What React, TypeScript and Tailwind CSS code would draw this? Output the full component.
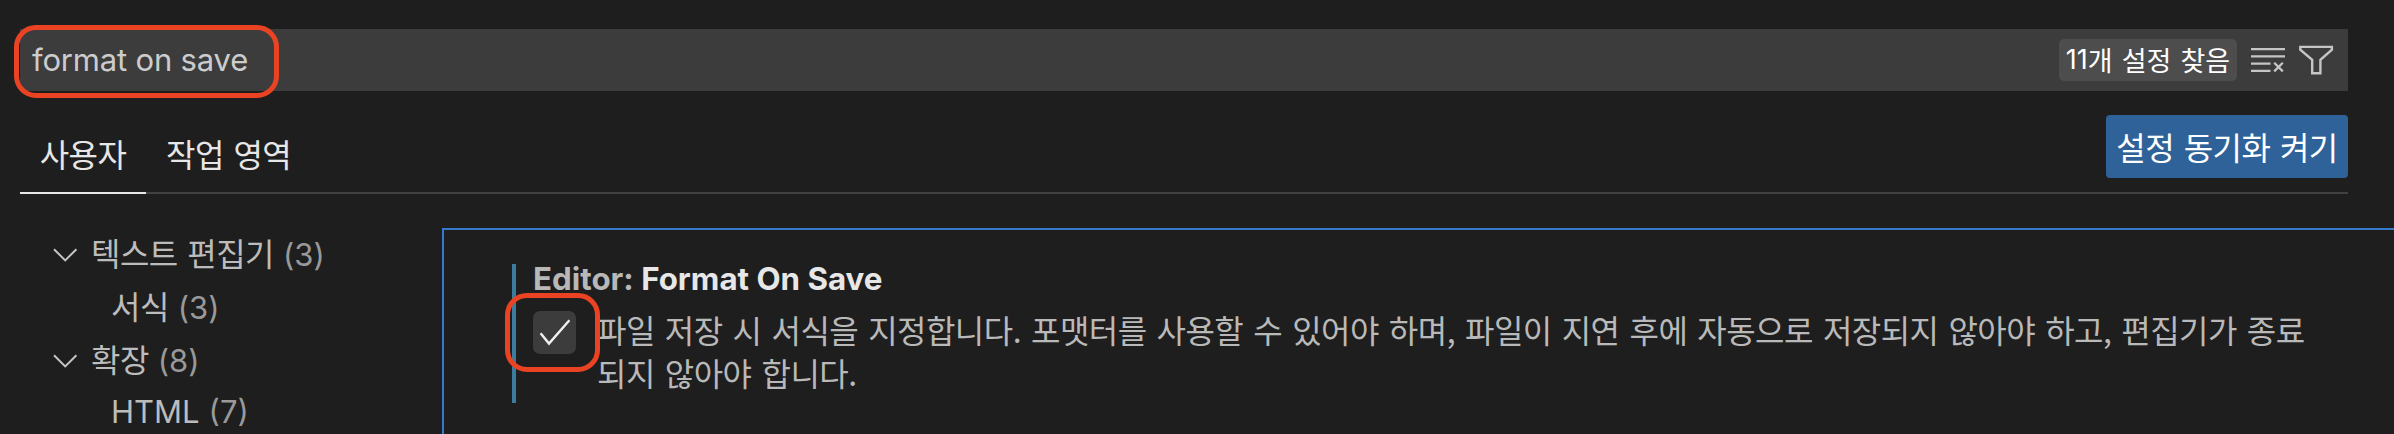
const kr = "font-['Noto_Sans_CJK_KR',sans-serif] tracking-[-0.55px] [word-spacing:3px]";
const latin = "font-['Inter','Noto_Sans_CJK_KR',sans-serif] [word-spacing:0px]";

function SearchBar() {
  return (
    <div className="relative flex h-[62px] items-center justify-between bg-[#3c3c3c] pr-[14px] pl-3">
      <span className={`${latin} pb-px text-[31px] leading-[42px] tracking-[-0.18px] text-[#cccccc]`}>format on save</span>
      <div className="flex items-center">
        <div className="mr-[14px] flex h-[42px] w-[178px] items-center justify-center rounded-[5px] bg-[#4d4d4d] text-[27px] leading-[42px] whitespace-nowrap text-white">
          <span className={latin}>11</span>
          <span className="font-['Noto_Sans_CJK_KR',sans-serif] [word-spacing:3px]">개 설정 찾음</span>
        </div>
        <svg width="34" height="26" viewBox="0 0 34 26" fill="none" stroke="#c5c5c5" strokeWidth="2.3">
          <path d="M0 2.1h34M0 9.3h34M0 16.6h19.5M0 23.8h19.5M23.2 15.8l8.6 8.6M31.8 15.8l-8.6 8.6" />
        </svg>
        <svg className="ml-[14px]" width="35" height="30" viewBox="0 0 35 30" fill="none" stroke="#c5c5c5" strokeWidth="2.4">
          <path d="M1.3 1.9h31.6v2.7L21.4 14.8v13.4h-8.2V14.8L1.3 4.6z" />
        </svg>
      </div>
      <div className="absolute -top-1 -left-[6px] h-[73px] w-[265px] rounded-[22px] border-[5px] border-[#ea4323]" />
    </div>
  );
}

function Tabs() {
  return (
    <div className="flex h-[103px] justify-between border-b-2 border-[#414141]">
      <div className={`${kr} flex text-[32px] leading-[42px] text-[#e7e7e7]`}>
        <div className="-mb-[2px] w-[126px] border-b-2 border-[#e7e7e7] pt-[41px] text-center">사용자</div>
        <div className="pt-[41px] pl-5">작업 영역</div>
      </div>
      <button className={`${kr} mt-6 h-[63px] w-[242px] rounded-[4px] bg-[#2e6299] text-[32px] leading-[63px] whitespace-nowrap text-white`}>
        설정 동기화 켜기
      </button>
    </div>
  );
}

function TreeRow({ label, count, open, plain }: { label: string; count: number; open?: boolean; plain?: boolean }) {
  return (
    <div className={`flex h-[52.8px] shrink-0 items-center text-[#bcbcbc] ${open ? "pl-[53px]" : "pl-[111px]"}`}>
      {open && (
        <svg className="mt-[6px] mr-[13px]" width="25" height="14" viewBox="0 0 25 14" fill="none" stroke="#c5c5c5" strokeWidth="2">
          <path d="M1 1.2l11.2 11.2L23.4 1.2" />
        </svg>
      )}
      <div className={`${plain ? `${latin} pt-[2px]` : `${kr} pb-px`} text-[32px] leading-[52px] whitespace-nowrap`}>
        <span className={plain ? "text-[31px]" : ""}>{label}</span>
        <span className={`${latin} ml-[9px] text-[31px] leading-none tracking-normal text-[#999999]`}>({count})</span>
      </div>
    </div>
  );
}

function Tree() {
  return (
    <nav className="flex w-[442px] shrink-0 flex-col overflow-hidden pt-[32px]">
      <TreeRow label="텍스트 편집기" count={3} open />
      <TreeRow label="서식" count={3} />
      <TreeRow label="확장" count={8} open />
      <TreeRow label="HTML" count={7} plain />
    </nav>
  );
}

function Checkbox() {
  return (
    <div className="relative mt-[3px] h-[43px] w-[43px] shrink-0 rounded-[7px] bg-[#3c3c3c]">
      <svg width="43" height="43" viewBox="0 0 43 43" fill="none" stroke="#f0f0f0" strokeWidth="2.4">
        <path d="M7.6 22.3L16 32.6 36.4 9.2" />
      </svg>
      <div className="absolute -top-[18px] -left-[28px] h-[79px] w-[95px] rounded-[22px] border-[5px] border-[#ea4323]" />
    </div>
  );
}

function Setting() {
  return (
    <section className="mt-[34px] flex-1 border-t-2 border-l-2 border-[#3579cb] pt-[34px] pl-[68px]">
      <div className="h-[139px] border-l-4 border-[#3b7b9b] pl-[17px]">
        <h3 className={`${latin} h-[44px] text-[31.3px] leading-[30px] font-bold whitespace-nowrap text-[#e7e7e7]`}>
          <span className="text-[#b8b8b8]">Editor: </span>Format On Save
        </h3>
        <div className="flex">
          <Checkbox />
          <p className="ml-[21px] font-['Noto_Sans_CJK_KR',sans-serif] text-[32px] leading-[43.3px] tracking-[-0.55px] whitespace-nowrap text-[#b9b9b9] [word-spacing:3.4px]">
            파일 저장 시 서식을 지정합니다. 포맷터를 사용할 수 있어야 하며, 파일이 지연 후에 자동으로 저장되지 않아야 하고, 편집기가 종료
            <br />
            되지 않아야 합니다.
          </p>
        </div>
      </div>
    </section>
  );
}

export default function App() {
  return (
    <div className="flex h-[434px] w-[2394px] flex-col overflow-hidden bg-[#1e1e1e] pt-[29px]">
      <header className="mr-[46px] ml-5">
        <SearchBar />
        <Tabs />
      </header>
      <main className="flex min-h-0 flex-1">
        <Tree />
        <Setting />
      </main>
    </div>
  );
}
